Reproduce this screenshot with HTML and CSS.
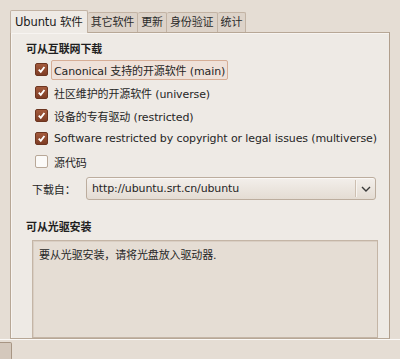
FILE: index.html
```html
<!DOCTYPE html>
<html lang="zh-CN">
<head>
  <meta charset="UTF-8" />
  <title>软件源</title>
  <link rel="stylesheet" href="styles.css">
</head>
<body>
  <div class="window">
    <div class="tabs">
      <div class="tab active">Ubuntu 软件</div>
      <div class="tab">其它软件</div>
      <div class="tab">更新</div>
      <div class="tab">身份验证</div>
      <div class="tab">统计</div>
    </div>

    <div class="panel">
      <h3>可从互联网下载</h3>
      <div class="checks">
        <label class="check">
          <span class="box on"><svg viewBox="0 0 12 12"><path d="M3 6.2 L5.2 8.6 L9.2 3.2" /></svg></span>
          <span class="text focus">Canonical 支持的开源软件 (main)</span>
        </label>
        <label class="check">
          <span class="box on"><svg viewBox="0 0 12 12"><path d="M3 6.2 L5.2 8.6 L9.2 3.2" /></svg></span>
          <span class="text">社区维护的开源软件 (universe)</span>
        </label>
        <label class="check">
          <span class="box on"><svg viewBox="0 0 12 12"><path d="M3 6.2 L5.2 8.6 L9.2 3.2" /></svg></span>
          <span class="text">设备的专有驱动 (restricted)</span>
        </label>
        <label class="check">
          <span class="box on"><svg viewBox="0 0 12 12"><path d="M3 6.2 L5.2 8.6 L9.2 3.2" /></svg></span>
          <span class="text">Software restricted by copyright or legal issues (multiverse)</span>
        </label>
        <label class="check">
          <span class="box"></span>
          <span class="text">源代码</span>
        </label>
      </div>

      <div class="source-row">
        <span class="source-label">下载自：</span>
        <div class="combo">
          <span class="combo-value">http://ubuntu.srt.cn/ubuntu</span>
          <span class="combo-sep"></span>
          <span class="combo-arrow"><svg viewBox="0 0 10 6"><path d="M1 1 L5 5 L9 1" /></svg></span>
        </div>
      </div>

      <h3 class="cd-title">可从光驱安装</h3>
      <div class="cd-box">要从光驱安装，请将光盘放入驱动器.</div>
    </div>

    <div class="footer">
      <div class="stub-btn"></div>
    </div>
  </div>
</body>
</html>
```

FILE: styles.css
```css
*, *::before, *::after { box-sizing: border-box; }

body {
  margin: 0;
  background: #e5ddd4;
  font-family: 'DejaVu Sans', 'Noto Sans CJK SC', sans-serif;
  font-size: 11px;
  letter-spacing: -0.12px;
  color: #262626;
  width: 400px;
  height: 359px;
  overflow: hidden;
}

.window { padding: 10px 10px 0 10px; }

/* タブ */
.tabs {
  display: flex;
  align-items: flex-end;
  height: 22px;
  position: relative;
  z-index: 1;
}
.tab {
  height: 20px;
  padding: 0 3px;
  line-height: 19px;
  font-size: 11px;
  background: #ddd3c9;
  border: 1px solid #c2b3a4;
  border-bottom: none;
  border-left: none;
  border-radius: 2px 2px 0 0;
  color: #2b2b2b;
  white-space: nowrap;
}
.tab.active {
  height: 23px;
  margin-bottom: -1px;
  padding: 0 4px;
  line-height: 22px;
  font-size: 11.5px;
  background: #eeeae5;
  border-left: 1px solid #c2b3a4;
  color: #1b1b1b;
}

/* パネル */
.panel {
  background: #eeeae5;
  border: 1px solid #b7a796;
  border-right-color: #b09e8c;
  width: 380px;
  height: 307px;
  padding: 9px 0 0 15px;
  box-shadow: inset 1px 1px 0 #f7f4f1;
}
h3 {
  margin: 0;
  font-size: 11px;
  font-weight: bold;
  line-height: 16px;
  color: #1e1e1e;
}

.checks {
  display: flex;
  flex-direction: column;
  gap: 4px;
  margin-top: 2px;
  padding-left: 9px;
}
.check {
  display: flex;
  align-items: center;
  gap: 3px;
  height: 19px;
}
.box {
  width: 13px;
  height: 13px;
  border: 1px solid #b8a898;
  border-radius: 2px;
  background: #fbfaf8;
  display: flex;
  align-items: center;
  justify-content: center;
}
.box.on {
  background: linear-gradient(#a35a3c, #7e3d25);
  border-color: #6c3520;
}
.box svg { width: 11px; height: 11px; }
.box path { fill: none; stroke: #fff; stroke-width: 2; }
.text {
  padding: 1px 2px;
  border: 1px solid transparent;
  border-radius: 2px;
  white-space: nowrap;
}
.text.focus {
  background: #efe1d9;
  border-color: #d6ad96;
}

/* ダウンロード元 */
.source-row {
  display: flex;
  align-items: center;
  margin-top: 6px;
  padding-left: 6px;
}
.source-label { width: 54px; }
.combo {
  width: 290px;
  height: 23px;
  display: flex;
  align-items: center;
  border: 1px solid #bcad9e;
  border-radius: 3px;
  background: linear-gradient(#f3efeb, #e4dcd3);
  box-shadow: inset 0 1px 0 #faf8f6;
}
.combo-value { flex: 1; padding-left: 5px; }
.combo-sep {
  width: 2px;
  height: 17px;
  border-left: 1px solid #cdbfb1;
  border-right: 1px solid #f7f4f0;
}
.combo-arrow { width: 18px; display: flex; justify-content: center; }
.combo-arrow svg { width: 10px; height: 6px; }
.combo-arrow path { fill: none; stroke: #3a3a3a; stroke-width: 1.4; }

.cd-title { margin-top: 20px; }
.cd-box {
  width: 346px;
  height: 98px;
  margin: 4px 0 0 6px;
  padding: 5px 6px;
  background: #e5ddd4;
  border: 1px solid #c4b5a6;
  box-shadow: inset 1px 1px 0 #d9cec3;
}

/* 下部 */
.footer {
  height: 22px;
  margin: 0 -10px;
  border-top: 1px solid #fbf9f7;
  padding-top: 2px;
}
.stub-btn {
  width: 12px;
  height: 18px;
  background: #d4c8bc;
  border: 1px solid #a79583;
  border-left: none;
  border-radius: 0 2px 2px 0;
}
```
